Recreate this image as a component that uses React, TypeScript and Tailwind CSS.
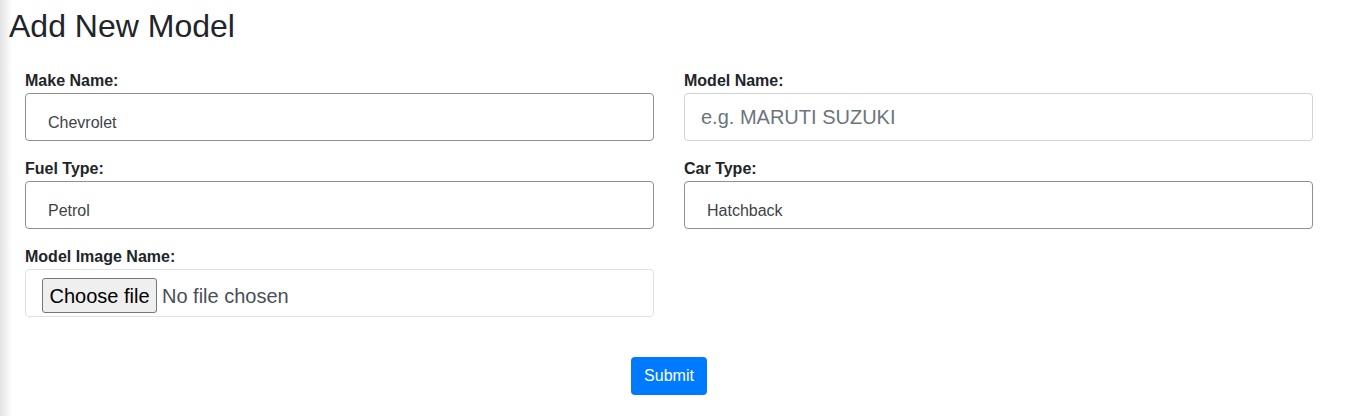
import React from 'react';

const Label = ({ children }: { children: React.ReactNode }) => (
  <label className="block h-[25px] pt-px leading-6 text-[16px] font-bold text-[#212529]">{children}</label>
);

// the pre-filled dropdown-looking boxes
const SelectBox = ({ label, value }: { label: string; value: string }) => (
  <div>
    <Label>{label}</Label>
    <div className="h-[48px] rounded-[4px] border border-[#8f8f8f] bg-white pl-[22px] pt-[17px] text-[16px] leading-6 text-[#3d4349]">
      {value}
    </div>
  </div>
);

const TextBox = ({ label, placeholder }: { label: string; placeholder: string }) => (
  <div>
    <Label>{label}</Label>
    <input
      type="text"
      placeholder={placeholder}
      className="block w-full h-[48px] rounded-[4px] border border-[#ced4da] bg-white px-4 text-[20px] text-[#495057] placeholder:text-[#6c757d] outline-none"
    />
  </div>
);

const FileBox = ({ label }: { label: string }) => (
  <div>
    <Label>{label}</Label>
    <div className="h-[48px] rounded-[4px] border border-[#dee2e6] bg-white pl-4 pt-[8px] flex items-start">
      <span className="h-[35px] w-[115px] flex items-center justify-center rounded-[3px] border border-[#767676] bg-[#efefef] text-[20px] text-black">
        Choose file
      </span>
      <span className="ml-[5px] h-[35px] flex items-center text-[20px] text-[#495057]">No file chosen</span>
    </div>
  </div>
);

export default function App() {
  return (
    <div className="w-[1351px] h-[416px] bg-[linear-gradient(to_right,#e2e2e2,#ffffff_12px)] font-['Liberation_Sans',Arial,sans-serif] text-[#212529]">
      <h2 className="pt-[7px] pl-[9px] text-[32px] leading-[38px] font-normal">Add New Model</h2>

      <form className="mt-[23px] pl-[25px] pr-[38px]">
        <div className="grid grid-cols-2 gap-x-[30px] gap-y-[15px]">
          <SelectBox label="Make Name:" value="Chevrolet" />
          <TextBox label="Model Name:" placeholder="e.g. MARUTI SUZUKI" />
          <SelectBox label="Fuel Type:" value="Petrol" />
          <SelectBox label="Car Type:" value="Hatchback" />
          <FileBox label="Model Image Name:" />
        </div>

        <div className="mt-[40px] flex justify-center">
          <button
            type="button"
            className="w-[76px] h-[38px] rounded-[4px] bg-[#007bff] text-white text-[16px] leading-6"
          >
            Submit
          </button>
        </div>
      </form>
    </div>
  );
}
